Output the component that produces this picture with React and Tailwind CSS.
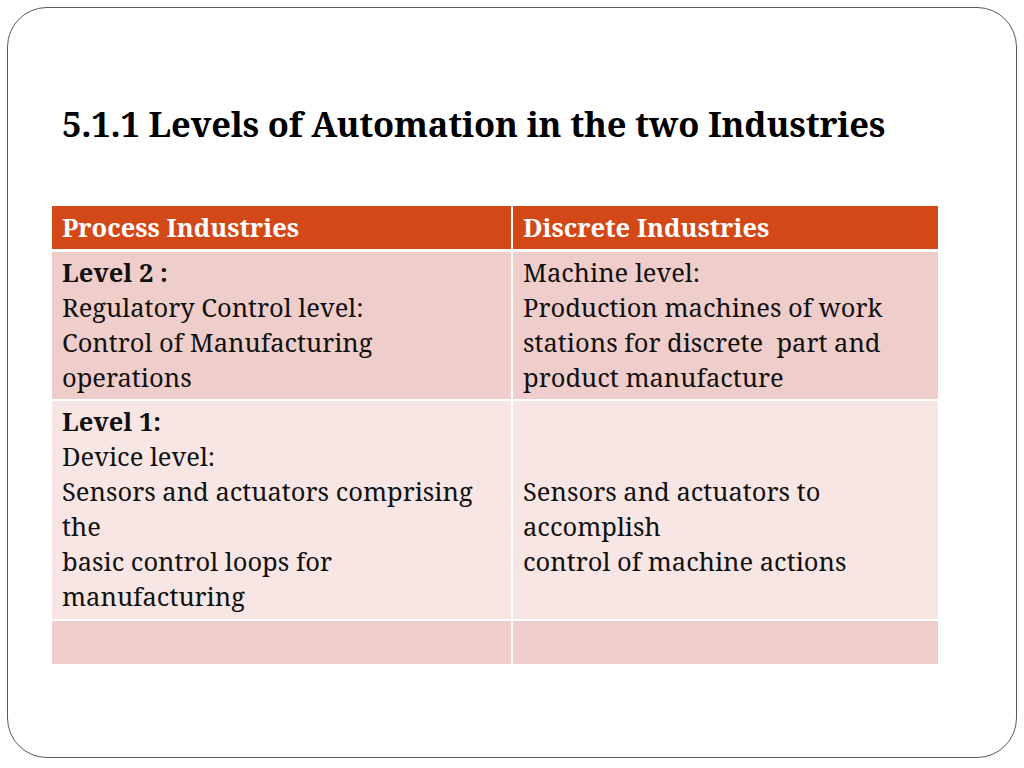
export default function App() {
  const font = { fontFamily: '"Noto Serif", "DejaVu Serif", serif' };
  return (
    <div className="w-[1024px] h-[768px] bg-white p-[7px]" style={font}>
      <div className="w-[1010px] h-[751px] rounded-[40px] border border-[#5a5a5a] pt-[96px] pl-[44px]">
        <h1 className="text-[34.5px] leading-[40px] font-bold text-black ml-[10px] tracking-[-0.2px]">
          5.1.1 Levels of Automation in the two Industries
        </h1>

        <div className="mt-[62px] w-[886px] grid grid-cols-[459px_425px] gap-[2px] bg-white text-[25.5px] leading-[35px] text-[#111]">
          <div className="bg-[#D34817] text-white font-bold h-[43px] pl-[10px] pt-[4px]">Process Industries</div>
          <div className="bg-[#D34817] text-white font-bold h-[43px] pl-[10px] pt-[4px]">Discrete Industries</div>

          <div className="bg-[#EFCDCB] h-[147px] pl-[10px] pt-[3px] mt-[1px]">
            <p className="font-bold">Level 2 :</p>
            <p>Regulatory Control level:</p>
            <p>Control of Manufacturing</p>
            <p>operations</p>
          </div>
          <div className="bg-[#EFCDCB] h-[147px] pl-[10px] pt-[3px] mt-[1px]">
            <p>Machine level:</p>
            <p>Production machines of work</p>
            <p>stations for discrete&nbsp; part and</p>
            <p>product manufacture</p>
          </div>

          <div className="bg-[#F8E6E4] h-[218px] pl-[10px] pt-[3px]">
            <p className="font-bold">Level 1:</p>
            <p>Device level:</p>
            <p>Sensors and actuators comprising</p>
            <p>the</p>
            <p>basic control loops for</p>
            <p>manufacturing</p>
          </div>
          <div className="bg-[#F8E6E4] h-[218px] pl-[10px] pt-[73px]">
            <p>Sensors and actuators to</p>
            <p>accomplish</p>
            <p>control of machine actions</p>
          </div>

          <div className="bg-[#EFCDCB] h-[43px]" />
          <div className="bg-[#EFCDCB] h-[43px]" />
        </div>
      </div>
    </div>
  );
}
